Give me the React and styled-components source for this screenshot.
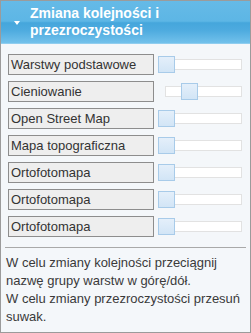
import styled, { createGlobalStyle } from "styled-components";

const GlobalStyle = createGlobalStyle`
  html, body {
    margin: 0;
    padding: 0;
    background: #ffffff;
  }
  body {
    font-family: "Liberation Sans", Arial, sans-serif;
  }
`;

const Panel = styled.div`
  width: 251px;
  height: 333px;
  box-sizing: border-box;
  border: 1px solid #9b9b9b;
  background: #f4f7fa;
  display: flex;
  flex-direction: column;
  overflow: hidden;
`;

const Header = styled.div`
  height: 43px;
  flex-shrink: 0;
  display: flex;
  align-items: center;
  padding-left: 13px;
  box-sizing: border-box;
  background: linear-gradient(
    to bottom,
    #65bae7 0%,
    #5db6e5 48%,
    #45a6dc 52%,
    #4eabdf 70%,
    #72c1eb 100%
  );
  border-bottom: 1px solid #8fcdef;
`;

const Arrow = styled.span`
  width: 0;
  height: 0;
  border-left: 3px solid transparent;
  border-right: 3px solid transparent;
  border-top: 4px solid #ffffff;
  margin-right: 10px;
  margin-top: 2px;
`;

const Title = styled.div`
  color: #ffffff;
  font-weight: bold;
  font-size: 14px;
  line-height: 17px;
  width: 160px;
`;

const Rows = styled.div`
  display: flex;
  flex-direction: column;
  gap: 6px;
  padding: 10px 0 0 7px;
`;

const Row = styled.div`
  display: flex;
  align-items: center;
  height: 21px;
`;

const Label = styled.div`
  width: 146px;
  height: 21px;
  box-sizing: border-box;
  border: 1px solid #8d8d8d;
  background: #eeeeee;
  color: #333333;
  font-size: 13px;
  line-height: 19px;
  padding-left: 2px;
  white-space: nowrap;
`;

const Slider = styled.div`
  position: relative;
  margin-left: ${(p) => 4 + p.$shift}px;
  width: ${(p) => 84 - p.$shift}px;
  height: 11px;
  box-sizing: border-box;
  border: 1px solid #e2e2e2;
  background: #ffffff;
`;

const Handle = styled.div`
  position: absolute;
  top: -4px;
  left: ${(p) => p.$pos}px;
  width: 17px;
  height: 17px;
  box-sizing: border-box;
  border: 1px solid #a8cbe9;
  background: linear-gradient(to bottom, #e4effa 0%, #d2e5f6 100%);
`;

const Divider = styled.div`
  height: 1px;
  background: #a9a9a9;
  margin: 10px 4px 0 4px;
`;

const Help = styled.p`
  margin: 6px 0 0 0;
  padding: 0 4px 0 5px;
  color: #3a3a3a;
  font-size: 13px;
  line-height: 18px;
`;

const layers = [
  { name: "Warstwy podstawowe", shift: 0, pos: -1 },
  { name: "Cieniowanie", shift: 7, pos: 15 },
  { name: "Open Street Map", shift: 0, pos: -1 },
  { name: "Mapa topograficzna", shift: 0, pos: -1 },
  { name: "Ortofotomapa", shift: 0, pos: -1 },
  { name: "Ortofotomapa", shift: 0, pos: -1 },
  { name: "Ortofotomapa", shift: 0, pos: -1 },
];

function App() {
  return (
    <>
      <GlobalStyle />
      <Panel>
        <Header>
          <Arrow />
          <Title>Zmiana kolejności i przezroczystości</Title>
        </Header>
        <Rows>
          {layers.map((l, i) => (
            <Row key={i}>
              <Label>{l.name}</Label>
              <Slider $shift={l.shift}>
                <Handle $pos={l.pos} />
              </Slider>
            </Row>
          ))}
        </Rows>
        <Divider />
        <Help>
          W celu zmiany kolejności przeciągnij nazwę grupy warstw w górę/dół.
          <br />
          W celu zmiany przezroczystości przesuń suwak.
        </Help>
      </Panel>
    </>
  );
}

export default App;
